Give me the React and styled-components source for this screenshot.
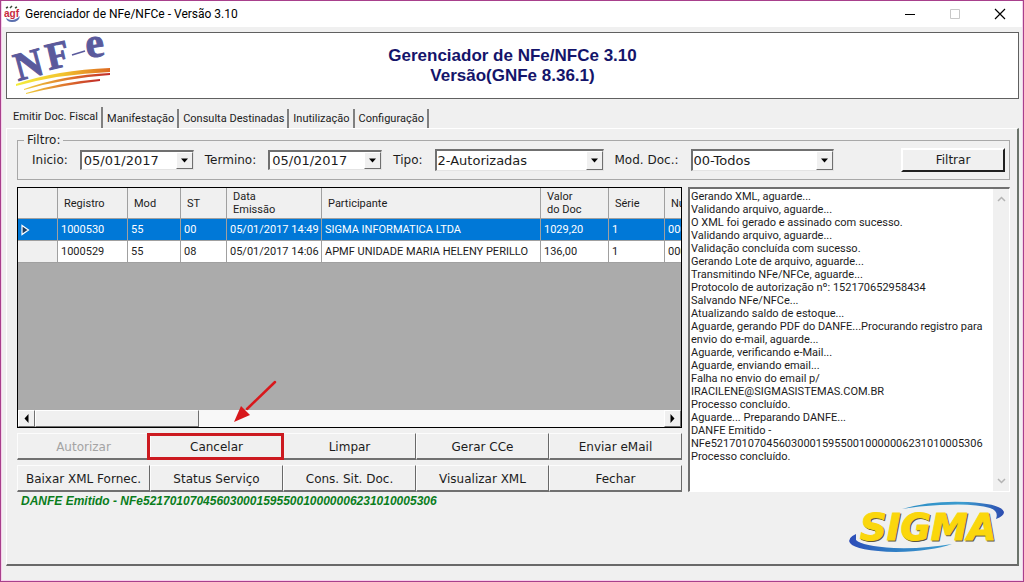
import React, { useState } from "react"
import styled, { createGlobalStyle, css } from "styled-components"

const tabs = [
  "Emitir Doc. Fiscal",
  "Manifestação",
  "Consulta Destinadas",
  "Inutilização",
  "Configuração",
]

const columns = [
  { label: "Registro", width: 70 },
  { label: "Mod", width: 53 },
  { label: "ST", width: 46 },
  { label: "Data\nEmissão", width: 95 },
  { label: "Participante", width: 219 },
  { label: "Valor\ndo Doc", width: 68 },
  { label: "Série", width: 56 },
  { label: "Numero", width: 80 },
]

const rows = [
  ["1000530", "55", "00", "05/01/2017 14:49", "SIGMA INFORMATICA LTDA", "1029,20", "1", "000000623"],
  ["1000529", "55", "08", "05/01/2017 14:06", "APMF UNIDADE MARIA HELENY PERILLO", "136,00", "1", "000000622"],
]

const actions = [
  { label: "Autorizar", disabled: true },
  { label: "Cancelar", marked: true },
  { label: "Limpar" },
  { label: "Gerar CCe" },
  { label: "Enviar eMail" },
  { label: "Baixar XML Fornec." },
  { label: "Status Serviço" },
  { label: "Cons. Sit. Doc." },
  { label: "Visualizar XML" },
  { label: "Fechar" },
]

const log = `Gerando XML, aguarde...
Validando arquivo, aguarde...
O XML foi gerado e assinado com sucesso.
Validando arquivo, aguarde...
Validação concluída com sucesso.
Gerando Lote de arquivo, aguarde...
Transmitindo NFe/NFCe, aguarde...
Protocolo de autorização nº: 152170652958434
Salvando NFe/NFCe...
Atualizando saldo de estoque...
Aguarde, gerando PDF do DANFE...Procurando registro para envio do e-mail, aguarde...
Aguarde, verificando e-Mail...
Aguarde, enviando email...
Falha no envio do email p/ IRACILENE@SIGMASISTEMAS.COM.BR
Processo concluído.
Aguarde... Preparando DANFE...
DANFE Emitido - NFe52170107045603000159550010000006231010005306
Processo concluído.`

const AppIcon = () => (
  <svg width="17" height="18" viewBox="0 0 17 18" aria-hidden="true">
    <path d="M2 3l2-1M6 3l2-2M11 3l2-1" stroke="#3a4a3a" strokeWidth="1.5" />
    <path d="M2 13q7 5 14-2q-1 6-8 6q-5 0-6-4z" fill="#5a6fae" />
    <text x="0" y="12" fontFamily="Liberation Sans, sans-serif" fontSize="10" fontWeight="700" fill="#c8283c">
      agf
    </text>
  </svg>
)

const NfeLogo = () => (
  <Logo width="110" height="64" viewBox="0 0 110 64" role="img" aria-label="NF-e">
    <defs>
      <linearGradient id="stripe" x1="0" x2="1">
        <stop offset="0" stopColor="#f4ee3c" />
        <stop offset="0.5" stopColor="#f2c32e" />
        <stop offset="1" stopColor="#dd6a22" />
      </linearGradient>
      <linearGradient id="stripeRed" x1="0" x2="1">
        <stop offset="0" stopColor="#f0cf3c" />
        <stop offset="0.6" stopColor="#dc6a2c" />
        <stop offset="1" stopColor="#c02a28" />
      </linearGradient>
    </defs>
    <g fontFamily="Liberation Serif, serif" fontWeight="700" fill="#5a5a9c" stroke="#5a5a9c">
      <text transform="translate(11 47) rotate(-15)" fontSize="40">N</text>
      <text transform="translate(42 36) rotate(-13)" fontSize="38">F</text>
      <text transform="translate(80 24) rotate(-8)" fontSize="42">e</text>
    </g>
    <path d="M65 21l13-4" stroke="#5a5a9c" strokeWidth="1.5" />
    <path d="M9 50Q50 36 103 34v4Q52 40 9 52z" fill="url(#stripe)" />
    <path d="M17 55Q56 41 103 39v2Q58 44 17 56z" fill="url(#stripeRed)" />
    <path d="M19 59Q54 48 93 45v2Q56 51 19 60z" fill="url(#stripeRed)" />
  </Logo>
)

const SigmaLogo = () => (
  <Logo width="158" height="54" viewBox="0 0 158 54" role="img" aria-label="SIGMA">
    <defs>
      <linearGradient id="swooshTop" x1="0" x2="1">
        <stop offset="0" stopColor="#2a8cc4" />
        <stop offset="0.6" stopColor="#3c9ccf" />
        <stop offset="1" stopColor="#2c4cb0" />
      </linearGradient>
      <linearGradient id="swooshBottom" x1="0" x2="1">
        <stop offset="0" stopColor="#2c4cb8" />
        <stop offset="0.4" stopColor="#2f7cc4" />
        <stop offset="1" stopColor="#3c9ccf" />
      </linearGradient>
    </defs>
    <path d="M54 9Q84 0 120 2Q154 4 156 12Q156 16 148 19Q151 11 142 8Q126 3 92 5Q70 6 54 9z" fill="url(#swooshTop)" />
    <path d="M8 34Q-1 38 2 43Q8 51 48 52Q84 51 104 44Q76 49 46 48Q14 46 8 40z" fill="url(#swooshBottom)" />
    <g fontFamily="DejaVu Sans, sans-serif" fontSize="37" fontWeight="700" fontStyle="italic">
      <text x="13" y="41" fill="#5c5640" stroke="#5c5640">
        SIGMA
      </text>
      <text x="12" y="40" fill="#fbd70c" stroke="#fbd70c">
        SIGMA
      </text>
    </g>
  </Logo>
)

const Triangle = ({ points, size = 9 }) => (
  <svg width={size} height={size} viewBox="0 0 9 9" aria-hidden="true">
    <path d={points} fill="#000" />
  </svg>
)

const down = "M1 2.500h7L4.500 6.500z"
const left = "M6.500 0v9L2.500 4.500z"
const right = "M2.500 0v9L6.500 4.500z"

const PointerArrow = () => (
  <ArrowDrawing width="46" height="46" viewBox="0 0 46 46" aria-hidden="true">
    <path d="M43 3L15 30" stroke="#d8181c" strokeWidth="2.500" strokeLinecap="round" />
    <path d="M2 43L9 27L13 31L18 36z" fill="#d8181c" />
  </ArrowDrawing>
)

const DateField = ({ id, label }) => {
  const [value, setValue] = useState("05/01/2017")
  return (
    <Field>
      <label htmlFor={id}>{label}</label>
      <Combo $width={114} $height={20}>
        <DateInput id={id} value={value} onChange={e => setValue(e.target.value)} />
        <ComboButton type="button" aria-label={`Abrir calendário ${label}`}>
          <Triangle points={down} />
        </ComboButton>
      </Combo>
    </Field>
  )
}

const SelectField = ({ id, label, width, options }) => (
  <Field>
    <label htmlFor={id}>{label}</label>
    <Combo $width={width} $height={22}>
      <Select id={id}>
        {options.map(option => (
          <option key={option}>{option}</option>
        ))}
      </Select>
      <ComboArrow>
        <Triangle points={down} />
      </ComboArrow>
    </Combo>
  </Field>
)

const App = () => {
  const [activeTab, setActiveTab] = useState(0)
  const [selected, setSelected] = useState(0)

  return (
    <Window>
      <GlobalStyle />
      <TitleBar>
        <AppIcon />
        <Title>Gerenciador de NFe/NFCe - Versão 3.10</Title>
        <WindowButton type="button" aria-label="Minimizar">
          <svg width="12" height="12" viewBox="0 0 12 12">
            <path d="M1 6.500h10" stroke="#000" />
          </svg>
        </WindowButton>
        <WindowButton type="button" aria-label="Maximizar" disabled>
          <svg width="12" height="12" viewBox="0 0 12 12">
            <path d="M1.500 1.500h9v9h-9z" fill="none" stroke="#c8c8c8" />
          </svg>
        </WindowButton>
        <WindowButton type="button" aria-label="Fechar janela">
          <svg width="12" height="12" viewBox="0 0 12 12">
            <path d="M1 1l10 10M11 1L1 11" stroke="#000" strokeWidth="1.200" />
          </svg>
        </WindowButton>
      </TitleBar>

      <Client>
        <Banner>
          <NfeLogo />
          <BannerTitle>
            Gerenciador de NFe/NFCe 3.10
            <br />
            Versão(GNFe 8.36.1)
          </BannerTitle>
        </Banner>

        <TabList role="tablist">
          {tabs.map((tab, i) => (
            <Tab
              key={tab}
              type="button"
              role="tab"
              aria-selected={i === activeTab}
              $active={i === activeTab}
              onClick={() => setActiveTab(i)}
            >
              {tab}
            </Tab>
          ))}
        </TabList>

        <TabPanel role="tabpanel">
          <Filter>
            <legend>Filtro:</legend>
            <FilterRow>
              <DateField id="inicio" label="Inicio:" />
              <DateField id="termino" label="Termino:" />
              <SelectField id="tipo" label="Tipo:" width={169} options={["2-Autorizadas"]} />
              <SelectField id="modelo" label="Mod. Doc.:" width={143} options={["00-Todos"]} />
              <FilterButton type="button">Filtrar</FilterButton>
            </FilterRow>
          </Filter>

          <Content>
            <Documents>
              <GridBox>
                <GridView>
                  <Table>
                    <colgroup>
                      <Col $width={40} />
                      {columns.map(column => (
                        <Col key={column.label} $width={column.width} />
                      ))}
                    </colgroup>
                    <thead>
                      <tr>
                        <HeadCell aria-label="Linha atual" />
                        {columns.map(column => (
                          <HeadCell key={column.label} scope="col">
                            {column.label}
                          </HeadCell>
                        ))}
                      </tr>
                    </thead>
                    <tbody>
                      {rows.map((row, i) => (
                        <Row key={row[0]} $selected={i === selected} onClick={() => setSelected(i)}>
                          <td>
                            {i === selected && (
                              <svg width="9" height="12" viewBox="0 0 9 12" aria-hidden="true">
                                <path d="M1 1.500v9L7.500 6z" fill="#1c3c60" stroke="#fff" strokeWidth="1.200" />
                              </svg>
                            )}
                          </td>
                          {row.map((cell, j) => (
                            <td key={columns[j].label}>{cell}</td>
                          ))}
                        </Row>
                      ))}
                    </tbody>
                  </Table>
                </GridView>
                <HorizontalScroll>
                  <ScrollButton type="button" aria-label="Rolar para a esquerda">
                    <Triangle points={left} />
                  </ScrollButton>
                  <ScrollTrack>
                    <ScrollThumb />
                  </ScrollTrack>
                  <ScrollButton type="button" aria-label="Rolar para a direita">
                    <Triangle points={right} />
                  </ScrollButton>
                </HorizontalScroll>
              </GridBox>

              <Actions>
                {actions.map(action => (
                  <ActionCell key={action.label}>
                    <ActionButton type="button" disabled={action.disabled}>
                      {action.label}
                    </ActionButton>
                    {action.marked && (
                      <>
                        <Marker />
                        <PointerArrow />
                      </>
                    )}
                  </ActionCell>
                ))}
              </Actions>
            </Documents>

            <LogBox>
              <LogText aria-label="Log de processamento" readOnly value={log} />
              <VerticalScroll aria-hidden="true">
                <svg width="9" height="6" viewBox="0 0 9 6">
                  <path d="M1 5l3.500-3.500L8 5" fill="none" stroke="#b4b4b4" strokeWidth="1.500" />
                </svg>
                <svg width="9" height="6" viewBox="0 0 9 6">
                  <path d="M1 1l3.500 3.500L8 1" fill="none" stroke="#b4b4b4" strokeWidth="1.500" />
                </svg>
              </VerticalScroll>
            </LogBox>
          </Content>

          <Footer>
            <Status>DANFE Emitido - NFe52170107045603000159550010000006231010005306</Status>
            <SigmaLogo />
          </Footer>
        </TabPanel>
      </Client>
    </Window>
  )
}

export default App

// Style
const smallFont = 'Roboto, "Liberation Sans", Arial, sans-serif'
const boldFont = '"Liberation Sans", Arial, sans-serif'
const wideFont = '"DejaVu Sans", Verdana, sans-serif'

const GlobalStyle = createGlobalStyle`
  *, *::before, *::after {
    box-sizing: border-box;
  }
  body {
    margin: 0;
    background: #f0f0f0;
    color: #1c1c1c;
    font: 11px/13px ${smallFont};
  }
  button, input, select, textarea {
    margin: 0;
    padding: 0;
    border: 0;
    border-radius: 0;
    font: inherit;
    color: inherit;
  }
  svg {
    display: block;
    flex: none;
  }
`

const Logo = styled.svg`
  overflow: visible;
`

const Window = styled.div`
  display: flex;
  flex-direction: column;
  min-height: 100vh;
  border: 1px solid #a8408c;
  box-shadow: inset 0 0 0 1px #f6d0ea;
`

const TitleBar = styled.header`
  display: flex;
  align-items: center;
  height: 26px;
  margin: 0 1px;
  padding-left: 2px;
  background: #fff;
`

const Title = styled.span`
  flex: 1;
  padding-left: 4px;
  font: 12px/16px ${smallFont};
  color: #000;
`

const WindowButton = styled.button`
  display: flex;
  align-items: center;
  justify-content: center;
  width: 45px;
  height: 26px;
  background: none;
`

const Client = styled.main`
  flex: 1;
  display: flex;
  flex-direction: column;
  padding: 5px 4px 15px 5px;
`

const Banner = styled.div`
  display: grid;
  grid-template-columns: 1fr auto 1fr;
  align-items: center;
  height: 67px;
  border: 1px solid #606060;
  background: #fff;
`

const BannerTitle = styled.h1`
  margin: 0;
  font: 700 17px/20px ${boldFont};
  text-align: center;
  color: #14146a;
`

const TabList = styled.div`
  display: flex;
  align-items: flex-end;
  margin-top: 8px;
  padding-left: 2px;
`

const Tab = styled.button`
  height: 19px;
  padding: 0 3px 0 4px;
  border-right: 2px solid #808080;
  background: none;
  font-size: 11px;
  line-height: 13px;

  ${({ $active }) =>
    $active &&
    css`
      height: 21px;
      padding: 0 3px 2px 5px;
    `}
`

const TabPanel = styled.section`
  flex: 1;
  display: flex;
  flex-direction: column;
  padding: 3px 7px 0 10px;
  border: 1px solid #fff;
  border-right: 2px solid #6c746c;
  border-bottom: 2px solid #696969;
`

const Filter = styled.fieldset`
  margin: 0;
  padding: 0 4px 7px 14px;
  border: 1px solid #a8a8a8;
  font: 12px/16px ${wideFont};

  legend {
    margin-left: -8px;
    padding: 0 3px;
  }
`

const FilterRow = styled.div`
  display: flex;
  align-items: center;
  gap: 11px;
`

const Field = styled.div`
  display: flex;
  align-items: center;
  gap: 12px;
`

const Combo = styled.div`
  display: grid;
  grid-template-columns: 1fr 17px;
  width: ${({ $width }) => $width}px;
  height: ${({ $height }) => $height}px;
  border: 1px solid #e4e4e4;
  border-top: 2px solid #707070;
  border-left: 2px solid #707070;
  background: #fff;
  font-size: 13px;
`

const DateInput = styled.input`
  min-width: 0;
  padding-left: 2px;
  background: #fff;
`

const Select = styled.select`
  grid-area: 1 / 1 / 2 / 3;
  padding-left: 1px;
  appearance: none;
  background: #fff;
`

const arrowBox = css`
  display: flex;
  align-items: center;
  justify-content: center;
  border: 1px solid #fff;
  border-right-color: #707070;
  border-bottom-color: #707070;
  background: #f0f0f0;
`

const ComboButton = styled.button`
  ${arrowBox}
`

const ComboArrow = styled.span`
  ${arrowBox}
  grid-area: 1 / 2;
  pointer-events: none;
`

const FilterButton = styled.button`
  width: 104px;
  height: 24px;
  margin-left: auto;
  border: 2px solid #fff;
  border-right-color: #202020;
  border-bottom-color: #202020;
  background: #f0f0f0;
`

const Content = styled.div`
  flex: 1;
  display: grid;
  grid-template-columns: minmax(0, 1fr) 322px;
  gap: 6px;
  margin-top: 7px;
`

const Documents = styled.div`
  display: flex;
  flex-direction: column;
  gap: 5px;
`

const GridBox = styled.div`
  flex: 1;
  display: flex;
  flex-direction: column;
  border: 1px solid #000;
  background: #ababab;
`

const GridView = styled.div`
  flex: 1;
  overflow: hidden;
`

const Table = styled.table`
  width: 100%;
  table-layout: fixed;
  border-spacing: 0;
  white-space: nowrap;

  td {
    height: 22px;
    padding: 0 3px;
    border-right: 1px solid #a0a0a0;
    border-bottom: 1px solid #a0a0a0;
    overflow: hidden;
  }
`

const Col = styled.col`
  width: ${({ $width }) => $width}px;
`

const HeadCell = styled.th`
  height: 31px;
  padding: 0 0 0 6px;
  border-right: 1px solid #a0a0a0;
  border-bottom: 1px solid #a0a0a0;
  background: #f0f0f0;
  font-weight: 400;
  text-align: left;
  white-space: pre;
`

const Row = styled.tr`
  background: ${({ $selected }) => ($selected ? "#0078d7" : "#fff")};
  color: ${({ $selected }) => ($selected ? "#fff" : "inherit")};

  td:first-child {
    background: ${({ $selected }) => ($selected ? "#0078d7" : "#f0f0f0")};
  }
`

const HorizontalScroll = styled.div`
  display: flex;
  height: 17px;
`

const ScrollButton = styled.button`
  ${arrowBox}
  width: 17px;
`

const ScrollTrack = styled.div`
  flex: 1;
  background: #f8f8f8;
`

const ScrollThumb = styled.div`
  width: 26%;
  height: 100%;
  border: 1px solid #fff;
  border-right-color: #707070;
  border-bottom-color: #707070;
  background: #f0f0f0;
`

const Actions = styled.div`
  display: grid;
  grid-template-columns: repeat(5, 1fr);
  row-gap: 5px;
`

const ActionCell = styled.div`
  position: relative;
  display: grid;
`

const ActionButton = styled.button`
  height: 27px;
  padding-top: 2px;
  border: 1px solid #fcfcfc;
  border-right-color: #696969;
  border-bottom: 2px solid #707070;
  background: #f0f0f0;
  font: 12px/16px ${wideFont};

  &:disabled {
    color: #a4a4a4;
  }
`

const Marker = styled.span`
  position: absolute;
  z-index: 1;
  inset: 0 -1px 0 -3px;
  border: 3px solid #cc1a20;
  pointer-events: none;
`

const ArrowDrawing = styled.svg`
  position: absolute;
  left: 82px;
  bottom: 35px;
  pointer-events: none;
`

const LogBox = styled.div`
  display: flex;
  border: 1px solid #fff;
  border-top: 2px solid #707070;
  border-left: 2px solid #707070;
  background: #fff;
`

const LogText = styled.textarea`
  flex: 1;
  padding: 1px 0 0 1px;
  resize: none;
  overflow: hidden;
  background: #fff;
`

const VerticalScroll = styled.div`
  display: flex;
  flex-direction: column;
  justify-content: space-between;
  align-items: center;
  width: 16px;
  padding: 7px 0;
  background: #f0f0f0;
`

const Footer = styled.footer`
  display: flex;
  justify-content: space-between;
  height: 72px;
  padding: 8px 4px 0;
`

const Status = styled.output`
  margin-top: -6px;
  font: italic 700 12px/14px ${boldFont};
  color: #0a7d1c;
`
